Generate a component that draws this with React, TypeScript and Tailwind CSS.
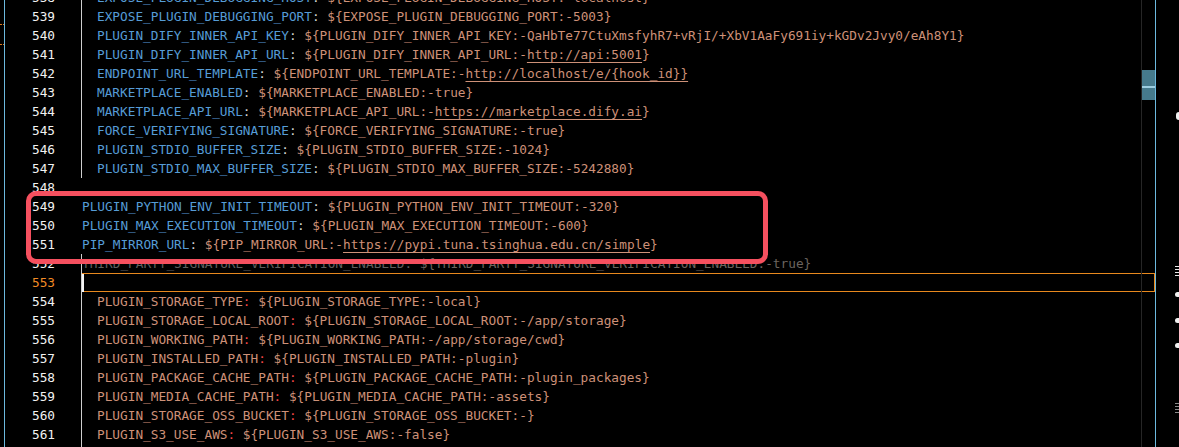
import React from "react";

type Seg = { t: string; c: string; u?: boolean };

const BLUE = "text-[#569cd6]";
const WHITE = "text-[#d4d4d4]";
const SALMON = "text-[#ce9178]";
const RED = "text-[#f44747]";
const GHOST_K = "text-[#5f5f5f]";
const GHOST_V = "text-[#6b645f]";

function env(key: string, def: string, url = false, tail = "}", mode: "blue" | "salmon" = "blue"): Seg[] {
  const keyC = mode === "blue" ? BLUE : SALMON;
  const colonC = mode === "blue" ? WHITE : RED;
  const segs: Seg[] = [
    { t: key, c: keyC },
    { t: ":", c: colonC },
    { t: " ${" + key + ":-", c: SALMON },
  ];
  if (url) {
    segs.push({ t: def, c: SALMON, u: true });
    if (tail) segs.push({ t: tail, c: SALMON });
  } else {
    segs.push({ t: def + tail, c: SALMON });
  }
  return segs;
}

type Row = { n: number; indent: boolean; guide: boolean; segs: Seg[]; current?: boolean };

const rows: Row[] = [
  { n: 538, indent: true, guide: true, segs: env("EXPOSE_PLUGIN_DEBUGGING_HOST", "localhost") },
  { n: 539, indent: true, guide: true, segs: env("EXPOSE_PLUGIN_DEBUGGING_PORT", "5003") },
  { n: 540, indent: true, guide: true, segs: env("PLUGIN_DIFY_INNER_API_KEY", "QaHbTe77CtuXmsfyhR7+vRjI/+XbV1AaFy691iy+kGDv2Jvy0/eAh8Y1") },
  { n: 541, indent: true, guide: true, segs: env("PLUGIN_DIFY_INNER_API_URL", "http://api:5001", true) },
  { n: 542, indent: true, guide: true, segs: env("ENDPOINT_URL_TEMPLATE", "http://localhost/e/{hook_id}}", true, "") },
  { n: 543, indent: true, guide: true, segs: env("MARKETPLACE_ENABLED", "true") },
  { n: 544, indent: true, guide: true, segs: env("MARKETPLACE_API_URL", "https://marketplace.dify.ai", true) },
  { n: 545, indent: true, guide: true, segs: env("FORCE_VERIFYING_SIGNATURE", "true") },
  { n: 546, indent: true, guide: true, segs: env("PLUGIN_STDIO_BUFFER_SIZE", "1024") },
  { n: 547, indent: true, guide: true, segs: env("PLUGIN_STDIO_MAX_BUFFER_SIZE", "5242880") },
  { n: 548, indent: false, guide: false, segs: [] },
  { n: 549, indent: false, guide: false, segs: env("PLUGIN_PYTHON_ENV_INIT_TIMEOUT", "320") },
  { n: 550, indent: false, guide: false, segs: env("PLUGIN_MAX_EXECUTION_TIMEOUT", "600") },
  { n: 551, indent: false, guide: false, segs: env("PIP_MIRROR_URL", "https://pypi.tuna.tsinghua.edu.cn/simple", true) },
  {
    n: 552,
    indent: false,
    guide: true,
    segs: [
      { t: "THIRD_PARTY_SIGNATURE_VERIFICATION_ENABLED: ", c: GHOST_K },
      { t: "${THIRD_PARTY_SIGNATURE_VERIFICATION_ENABLED:-true}", c: GHOST_V },
    ],
  },
  { n: 553, indent: false, guide: true, segs: [], current: true },
  { n: 554, indent: true, guide: true, segs: env("PLUGIN_STORAGE_TYPE", "local", false, "}", "salmon") },
  { n: 555, indent: true, guide: true, segs: env("PLUGIN_STORAGE_LOCAL_ROOT", "/app/storage", false, "}", "salmon") },
  { n: 556, indent: true, guide: true, segs: env("PLUGIN_WORKING_PATH", "/app/storage/cwd", false, "}", "salmon") },
  { n: 557, indent: true, guide: true, segs: env("PLUGIN_INSTALLED_PATH", "plugin", false, "}", "salmon") },
  { n: 558, indent: true, guide: true, segs: env("PLUGIN_PACKAGE_CACHE_PATH", "plugin_packages", false, "}", "salmon") },
  { n: 559, indent: true, guide: true, segs: env("PLUGIN_MEDIA_CACHE_PATH", "assets", false, "}", "salmon") },
  { n: 560, indent: true, guide: true, segs: env("PLUGIN_STORAGE_OSS_BUCKET", "", false, "}", "salmon") },
  { n: 561, indent: true, guide: true, segs: env("PLUGIN_S3_USE_AWS", "false", false, "}", "salmon") },
  { n: 562, indent: true, guide: true, segs: env("PLUGIN_S3_USE_PATH_STYLE", "false", false, "}", "salmon") },
];

function CodeRow({ row }: { row: Row }) {
  return (
    <div className="flex h-[19px] leading-[19px]">
      <div className="w-[76px] shrink-0 flex">
        <div className={`w-[50px] text-right ${row.current ? "text-[#f28b25]" : "text-[#f2f2f2]"}`}>{row.n}</div>
      </div>
      <div
        className={`relative flex-1 flex border-l ${row.guide ? "border-[#cfcfcf]" : "border-transparent"}`}
      >
        {row.current ? (
          <>
            <div className="flex-1 border border-[#e8891e]" />
            <div className="absolute left-0 top-px w-[2px] h-[18px] bg-[#f4f4f4]" />
          </>
        ) : (
          <div className={`whitespace-pre ${row.indent ? "pl-[15px]" : ""}`}>
            {row.segs.map((s, i) => (
              <span
                key={i}
                className={`${s.c} ${s.u ? "underline decoration-[#ce9178] underline-offset-[3px]" : ""}`}
              >
                {s.t}
              </span>
            ))}
          </div>
        )}
      </div>
    </div>
  );
}

export default function App() {
  return (
    <div
      className="relative flex w-[1179px] h-[447px] bg-black overflow-hidden text-[12.75px]"
      style={{ fontFamily: '"DejaVu Sans Mono", "Liberation Mono", monospace' }}
    >
      {/* left margin with dirty markers */}
      <div className="w-[4px] shrink-0 flex flex-col">
        <div className="mt-[24px] h-px border-t border-dotted border-[#d9781c]" />
        <div className="mt-[19px] h-px border-t border-dotted border-[#d9781c]" />
      </div>
      <div className="w-px shrink-0 bg-[#6cb9de]" />

      {/* editor */}
      <div className="relative w-[1150px] shrink-0">
        <div className="flex flex-col -mt-[12px]">
          {rows.map((r) => (
            <CodeRow key={r.n} row={r} />
          ))}
        </div>
        {/* vertical scrollbar */}
        <div className="absolute right-0 top-0 h-full w-[14px] border-l border-[#262626] flex flex-col">
          <div className="mt-[70px] h-[30px] bg-[#467a8c] flex flex-col">
            <div className="mt-[16px] h-[2px] bg-[#9ccde0]" />
          </div>
        </div>
      </div>
      <div className="w-px shrink-0 bg-[#6cb9de]" />

      {/* clipped neighbouring panel */}
      <div className="relative flex-1 flex flex-col items-end">
        <div className="mt-[112px] w-[3px] h-[8px] rounded-l-full bg-[#f0f0f0]" />
        <div className="mt-[146px] w-[4px] flex flex-col gap-[2px]">
          <div className="h-px bg-[#e8e8e8]" />
          <div className="h-px bg-[#e8e8e8]" />
          <div className="h-px bg-[#e8e8e8]" />
          <div className="h-px bg-[#e8e8e8]" />
        </div>
        <div className="mt-[16px] w-[4px] h-[5px] rounded-l-full bg-[#f0f0f0]" />
        <div className="mt-[21px] w-[4px] h-[5px] rounded-l-full bg-[#f0f0f0]" />
        <div className="mt-[20px] w-[4px] h-[5px] rounded-l-full bg-[#f0f0f0]" />
        <div className="mt-[55px] w-[4px] flex flex-col gap-[2px]">
          <div className="h-px bg-[#8a8a8a]" />
          <div className="h-px bg-[#8a8a8a]" />
          <div className="h-px bg-[#8a8a8a]" />
          <div className="h-px bg-[#8a8a8a]" />
        </div>
      </div>

      {/* annotation highlight */}
      <div className="absolute left-[26px] top-[191px] w-[742px] h-[73px] border-[5px] border-[#f5505f] rounded-[10px]" />
    </div>
  );
}
